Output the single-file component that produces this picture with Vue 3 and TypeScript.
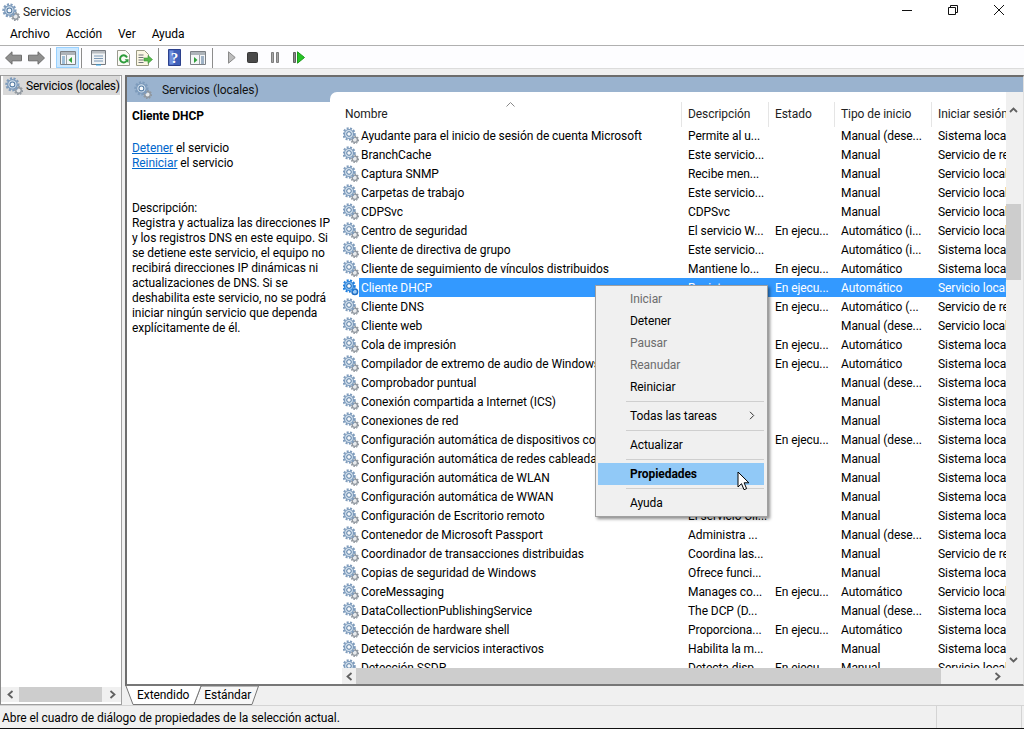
<script setup lang="ts">
// columns: nombre, descripcion, estado, tipo de inicio, inicio de sesion
type Row = [string, string, string, string, string]

const M = 'Manual'
const MD = 'Manual (dese...'
const A = 'Automático'
const AI = 'Automático (i...'
const SIS = 'Sistema local'
const LOC = 'Servicio local'
const RED = 'Servicio de red'
const RUN = 'En ejecu...'

const rows: Row[] = [
  ['Ayudante para el inicio de sesión de cuenta Microsoft', 'Permite al u...', '', MD, SIS],
  ['BranchCache', 'Este servicio...', '', M, RED],
  ['Captura SNMP', 'Recibe men...', '', M, LOC],
  ['Carpetas de trabajo', 'Este servicio...', '', M, LOC],
  ['CDPSvc', 'CDPSvc', '', M, LOC],
  ['Centro de seguridad', 'El servicio W...', RUN, AI, LOC],
  ['Cliente de directiva de grupo', 'Este servicio...', '', AI, SIS],
  ['Cliente de seguimiento de vínculos distribuidos', 'Mantiene lo...', RUN, A, SIS],
  ['Cliente DHCP', 'Registra y ac...', RUN, A, LOC],
  ['Cliente DNS', 'El servicio...', RUN, 'Automático (...', RED],
  ['Cliente web', 'Habilita los...', '', MD, LOC],
  ['Cola de impresión', 'Este servicio...', RUN, A, SIS],
  ['Compilador de extremo de audio de Windows', 'Administra...', RUN, A, SIS],
  ['Comprobador puntual', 'Comprueba...', '', MD, SIS],
  ['Conexión compartida a Internet (ICS)', 'Proporciona...', '', M, SIS],
  ['Conexiones de red', 'Administra...', '', M, SIS],
  ['Configuración automática de dispositivos conectados', 'Supervisa...', RUN, MD, SIS],
  ['Configuración automática de redes cableadas', 'El servicio...', '', M, SIS],
  ['Configuración automática de WLAN', 'El servicio...', '', M, SIS],
  ['Configuración automática de WWAN', 'Este servicio...', '', M, SIS],
  ['Configuración de Escritorio remoto', 'El servicio Cli...', '', M, SIS],
  ['Contenedor de Microsoft Passport', 'Administra ...', '', MD, SIS],
  ['Coordinador de transacciones distribuidas', 'Coordina las...', '', M, RED],
  ['Copias de seguridad de Windows', 'Ofrece funci...', '', M, SIS],
  ['CoreMessaging', 'Manages co...', RUN, A, LOC],
  ['DataCollectionPublishingService', 'The DCP (D...', '', MD, SIS],
  ['Detección de hardware shell', 'Proporciona...', RUN, A, SIS],
  ['Detección de servicios interactivos', 'Habilita la m...', '', M, SIS],
  ['Detección SSDP', 'Detecta disp...', RUN, M, LOC],
]

const selectedRow = 8

const description = [
  'Registra y actualiza las direcciones IP',
  'y los registros DNS en este equipo. Si',
  'se detiene este servicio, el equipo no',
  'recibirá direcciones IP dinámicas ni',
  'actualizaciones de DNS. Si se',
  'deshabilita este servicio, no se podrá',
  'iniciar ningún servicio que dependa',
  'explícitamente de él.',
]

const menuItems = [
  { label: 'Iniciar', disabled: true },
  { label: 'Detener' },
  { label: 'Pausar', disabled: true },
  { label: 'Reanudar', disabled: true },
  { label: 'Reiniciar', sep: true },
  { label: 'Todas las tareas', sub: true, sep: true },
  { label: 'Actualizar', sep: true },
  { label: 'Propiedades', active: true, sep: true },
  { label: 'Ayuda' },
]
</script>

<template>
  <div class="window">
    <svg class="defs" width="0" height="0">
      <defs>
        <symbol id="gear" viewBox="0 0 17 17">
          <circle cx="12.800" cy="12.800" r="2.600" fill="#e8eaec" stroke="#8f969e" stroke-width="1.300" />
          <circle cx="12.800" cy="12.800" r="3.700" fill="none" stroke="#8f969e" stroke-width="1.200" stroke-dasharray="1.500 1.300" />
          <circle cx="7" cy="7" r="5.700" fill="none" stroke="#7f9cbc" stroke-width="2" stroke-dasharray="2 1.400" />
          <circle cx="7" cy="7" r="4.500" fill="#d3e0ec" stroke="#7b9abc" stroke-width="1.200" />
          <circle cx="7" cy="7" r="2.300" fill="#f7f9fb" stroke="#557ba3" stroke-width="1" />
        </symbol>
        <symbol id="gear-sel" viewBox="0 0 17 17">
          <circle cx="12.800" cy="12.800" r="2.800" fill="#9ccbf7" stroke="#1f6fc4" stroke-width="1.500" />
          <circle cx="7" cy="7" r="5.700" fill="none" stroke="#1c7fe0" stroke-width="2" stroke-dasharray="2 1.400" />
          <circle cx="7" cy="7" r="4.500" fill="#7cbcf5" stroke="#2a7fd6" stroke-width="1.200" />
          <circle cx="7" cy="7" r="2.300" fill="#fff" stroke="#145fb0" stroke-width="1" />
        </symbol>
      </defs>
    </svg>

    <header class="titlebar">
      <svg class="title-icon" width="18" height="18"><use href="#gear" /></svg>
      <span class="title-text">Servicios</span>
      <div class="caption">
        <svg width="12" height="12" viewBox="0 0 12 12"><path d="M1 6.500h10" stroke="#111" fill="none" /></svg>
        <svg width="12" height="12" viewBox="0 0 12 12"><path d="M1.500 3.500h7v7h-7zM3.500 3.500v-2h7v7h-2" stroke="#111" fill="none" /></svg>
        <svg width="12" height="12" viewBox="0 0 12 12"><path d="M1 1l10 10M11 1L1 11" stroke="#111" fill="none" /></svg>
      </div>
    </header>

    <nav class="menubar">
      <span>Archivo</span><span>Acción</span><span>Ver</span><span>Ayuda</span>
    </nav>

    <div class="toolbar">
      <svg class="tb first" width="17" height="14" viewBox="0 0 17 14"><path d="M.5 7L7 .8v3.400h9.500v5.600H7v3.400z" fill="#8f8f8f" stroke="#6d6d6d" /></svg>
      <svg class="tb" width="17" height="14" viewBox="0 0 17 14"><path d="M16.500 7L10 .8v3.400H.5v5.600H10v3.400z" fill="#8f8f8f" stroke="#6d6d6d" /></svg>
      <i class="tb-sep"></i>
      <button class="tb-toggle">
        <svg width="16" height="14" viewBox="0 0 16 14"><path d="M.5.500h15v13H.5z" fill="#f4f6f8" stroke="#7d8186" /><path d="M1 1h14v3H1z" fill="#aeb4ba" /><path d="M2 6h3M2 8h3M2 10h3M2 12h3" stroke="#4a86b8" /><path d="M6.500 4v9" stroke="#9aa0a6" /><path d="M12 6v6L8.500 9z" fill="#2fa03a" /></svg>
      </button>
      <i class="tb-sep"></i>
      <svg class="tb gap-l" width="15" height="16" viewBox="0 0 15 16"><path d="M.5.500h14v14H.5z" fill="#f1f3f5" stroke="#767a80" /><path d="M1 1h13v2.500H1z" fill="#b8bcc1" /><path d="M3 6h9M3 8.500h9M3 11h9" stroke="#7b98b6" /><path d="M5 14.500h5v1H5z" fill="#2ba3e8" /></svg>
      <svg class="tb gap-m" width="15" height="16" viewBox="0 0 15 16"><path d="M1.500.500h8l4 4v11h-12z" fill="#fbfbf6" stroke="#9a9a90" /><path d="M11 7.500A3.600 3.600 0 1 0 10.600 11" fill="none" stroke="#2e9c3c" stroke-width="2" /><path d="M8.600 9.200l4 .1-.2 3.700z" fill="#2e9c3c" /></svg>
      <svg class="tb gap-s" width="17" height="16" viewBox="0 0 17 16"><path d="M.5.500h8l4 4v11H.5z" fill="#fbf7e4" stroke="#9a9a84" /><path d="M2.500 5h5M2.500 7.500h5M2.500 10h5M2.500 12.500h5" stroke="#6f7378" /><path d="M8 8h4V5.500l4.500 4-4.500 4V11H8z" fill="#56b84a" stroke="#3a9437" stroke-width=".6" /></svg>
      <i class="tb-sep"></i>
      <svg class="tb gap-help" width="13" height="17" viewBox="0 0 13 17"><path d="M.5.500h12v16H.5z" fill="#3f5fb8" stroke="#2a3f8c" /><path d="M1.500 1.500h4v14h-4z" fill="#6f8fdc" /><text x="6.500" y="13.500" text-anchor="middle" class="help-q">?</text></svg>
      <svg class="tb gap-n" width="16" height="14" viewBox="0 0 16 14"><path d="M.5.500h15v13H.5z" fill="#f4f6f8" stroke="#7d8186" /><path d="M1 1h14v3H1z" fill="#aeb4ba" /><path d="M9.500 4v9" stroke="#9aa0a6" /><path d="M11 6h3M11 8h3M11 10h3M11 12h3" stroke="#4a6f94" /><path d="M4 6v6l3.500-3z" fill="#2fa03a" /></svg>
      <i class="tb-sep sep-wide"></i>
      <svg class="tb gap-play" width="8" height="13" viewBox="0 0 8 13"><path d="M.5.800L7.200 6.500.5 12.200z" fill="#bdbdbd" stroke="#8a8a8a" /></svg>
      <svg class="tb gap-stop" width="11" height="11" viewBox="0 0 11 11"><rect x=".5" y=".5" width="10" height="10" rx="1" fill="#4a4a4a" stroke="#383838" /></svg>
      <svg class="tb gap-pause" width="8" height="11" viewBox="0 0 8 11"><path d="M.5.500h2v10h-2zM5.500.500h2v10h-2z" fill="#a6a6a6" stroke="#7d7d7d" /></svg>
      <svg class="tb gap-resume" width="12" height="13" viewBox="0 0 12 13"><path d="M.5 1.500h2v10h-2z" fill="#8a8a8a" stroke="#5f5f5f" /><path d="M4.500.800l7 5.700-7 5.700z" fill="#27c427" stroke="#1b9a1b" /></svg>
    </div>

    <main class="panes">
      <aside class="tree">
        <div class="tree-list">
          <div class="tree-item">
            <svg width="18" height="18"><use href="#gear" /></svg>
            <span>Servicios (locales)</span>
          </div>
        </div>
        <div class="hscroll tree-scroll">
          <span class="arr">
            <svg width="9" height="9" viewBox="0 0 9 9"><path d="M6.500 1L2.500 4.500l4 3.500" class="chev" /></svg>
          </span>
          <div class="h-track"><div class="h-thumb"></div></div>
          <span class="arr">
            <svg width="9" height="9" viewBox="0 0 9 9"><path d="M2.500 1l4 3.500-4 3.500" class="chev" /></svg>
          </span>
        </div>
      </aside>

      <section class="content">
        <div class="view">
          <div class="view-head">
            <svg width="18" height="18"><use href="#gear" /></svg>
            <span>Servicios (locales)</span>
          </div>
          <div class="view-body">
            <div class="task">
              <h1>Cliente DHCP</h1>
              <p class="links">
                <span><a>Detener</a> el servicio</span>
                <span><a>Reiniciar</a> el servicio</span>
              </p>
              <p class="desc">
                <span>Descripción:</span>
                <span v-for="line in description" :key="line">{{ line }}</span>
              </p>
            </div>

            <div class="listwrap">
              <div class="list-main">
                <div class="vis">
                  <div class="list-head">
                    <div class="hcell c0">Nombre<svg class="sort" width="9" height="5" viewBox="0 0 9 5"><path d="M.5 4.500l4-4 4 4" fill="none" stroke="#888" /></svg></div>
                    <div class="hcell c1">Descripción</div>
                    <div class="hcell c2">Estado</div>
                    <div class="hcell c3">Tipo de inicio</div>
                    <div class="hcell c4">Iniciar sesión</div>
                  </div>
                  <div class="rows">
                    <div v-for="(r, i) in rows" :key="r[0]" class="row" :class="{ sel: i === selectedRow }">
                      <div class="cell c0">
                        <svg width="17" height="17"><use :href="i === selectedRow ? '#gear-sel' : '#gear'" /></svg>
                        <span class="name">{{ r[0] }}</span>
                      </div>
                      <div class="cell c1">{{ r[1] }}</div>
                      <div class="cell c2">{{ r[2] }}</div>
                      <div class="cell c3">{{ r[3] }}</div>
                      <div class="cell c4">{{ r[4] }}</div>
                    </div>
                  </div>
                </div>
                <div class="vscroll">
                  <span class="varr">
                    <svg width="9" height="9" viewBox="0 0 9 9"><path d="M1 6l3.500-3.500L8 6" class="chev" /></svg>
                  </span>
                  <div class="v-track"><div class="v-thumb"></div></div>
                  <span class="varr">
                    <svg width="9" height="9" viewBox="0 0 9 9"><path d="M1 3l3.500 3.500L8 3" class="chev" /></svg>
                  </span>
                </div>
              </div>
              <div class="hscroll list-scroll">
                <span class="arr">
                  <svg width="9" height="9" viewBox="0 0 9 9"><path d="M6.500 1L2.500 4.500l4 3.500" class="chev" /></svg>
                </span>
                <div class="h-track"><div class="h-thumb"></div></div>
                <span class="arr">
                  <svg width="9" height="9" viewBox="0 0 9 9"><path d="M2.500 1l4 3.500-4 3.500" class="chev" /></svg>
                </span>
                <span class="corner"></span>
              </div>
            </div>
          </div>
        </div>
        <div class="tabs">
          <svg class="tab-lines" width="140" height="19" viewBox="0 0 140 19">
            <path d="M76 0H133.500L127 18.500H69z" fill="#f7f7f7" stroke="#777" />
            <path d="M1 0L8 18.500H69L76 0z" fill="#fff" stroke="none" />
            <path d="M1 0L8 18.500H69L76 0" fill="none" stroke="#777" />
          </svg>
          <span class="tab tab-a">Extendido</span>
          <span class="tab tab-b">Estándar</span>
        </div>
      </section>
    </main>

    <footer class="status">
      <span class="status-main">Abre el cuadro de diálogo de propiedades de la selección actual.</span>
      <span class="status-a"></span>
      <span class="status-b"></span>
    </footer>

    <div class="ctx">
      <template v-for="m in menuItems" :key="m.label">
        <div class="ctx-item" :class="{ off: m.disabled, on: m.active }">
          <span>{{ m.label }}</span>
          <svg v-if="m.sub" class="ctx-sub" width="6" height="9" viewBox="0 0 6 9"><path d="M1 .8l3.700 3.700L1 8.200" fill="none" stroke="#333" /></svg>
        </div>
        <div v-if="m.sep" class="ctx-sep"></div>
      </template>
    </div>

    <svg class="cursor" width="14" height="21" viewBox="0 0 14 21">
      <path d="M1 1v15l3.500-3.300 2.500 6 2.600-1.100-2.500-5.800h4.800z" fill="#fff" stroke="#000" stroke-width="1" />
    </svg>
  </div>
</template>

<style>
html, body {
  margin: 0;
  background: #fff;
}
</style>

<style scoped>
.window {
  position: relative;
  width: 1024px;
  height: 729px;
  overflow: hidden;
  display: flex;
  flex-direction: column;
  background: #f0f0f0;
  color: #000;
  font-family: Roboto, "Noto Sans", sans-serif;
  font-size: 12px;
  letter-spacing: -0.07px;
  border-bottom: 1px solid #111;
  box-sizing: border-box;
}
.defs { position: absolute; }

.titlebar {
  height: 24px;
  flex: none;
  display: flex;
  align-items: center;
  background: #fff;
  padding-left: 2px;
}
.title-text { margin-left: 3px; margin-bottom: 1px; color: #222; }
.caption {
  margin-left: auto;
  margin-bottom: 4px;
  padding-right: 19px;
  display: flex;
  gap: 34px;
}

.menubar {
  height: 21px;
  flex: none;
  display: flex;
  align-items: center;
  gap: 16px;
  padding-left: 10px;
  background: #fff;
  border-bottom: 1px solid #b0b0b0;
}
.menubar span { margin-bottom: 2px; }

.toolbar {
  height: 21px;
  padding-top: 1px;
  flex: none;
  display: flex;
  align-items: center;
  background: #fdfdff;
  border-bottom: 1px solid #dcdcdc;
}
.tb { flex: none; }
.first { margin-left: 5px; margin-right: 6px; }
.tb-sep { flex: none; width: 1px; height: 20px; background: #8c8c8c; margin: 0 5px 0 5px; }
.tb-toggle {
  width: 23px;
  height: 21px;
  padding: 0;
  flex: none;
  display: flex;
  align-items: center;
  justify-content: center;
  background: #cce8ff;
  border: 1px solid #99d1ff;
  box-sizing: border-box;
  margin-right: -3px;
}
.gap-l { margin-left: 4px; }
.gap-m { margin-left: 10px; }
.gap-s { margin-left: 5px; }
.gap-n { margin-left: 9px; }
.sep-wide { margin-left: 6px; }
.gap-help { margin-left: 4px; }
.gap-play { margin-left: 10px; }
.gap-stop { margin-left: 11px; }
.gap-pause { margin-left: 13px; }
.gap-resume { margin-left: 14px; }
.help-q { font: bold 15px "Liberation Serif", serif; fill: #fff; }

.panes {
  flex: 1;
  min-height: 0;
  display: flex;
  margin-top: 6px;
  gap: 3px;
}

.tree {
  width: 122px;
  flex: none;
  display: flex;
  flex-direction: column;
  background: #fff;
  border: 1px solid #a0a0a0;
  border-left-color: #8a8a8a;
  box-sizing: border-box;
}
.tree-list { flex: 1; padding: 0 1px 0 2px; }
.tree-item {
  height: 19px;
  display: flex;
  align-items: center;
  gap: 3px;
  background: #d9d9d9;
  padding-left: 2px;
  white-space: nowrap;
  letter-spacing: -0.22px;
  overflow: hidden;
}
.tree-item svg { flex: none; }

.hscroll {
  flex: none;
  height: 16px;
  display: flex;
  background: #f0f0f0;
}
.tree-scroll { height: 15px; margin-bottom: 2px; }
.arr {
  width: 18px;
  flex: none;
  display: flex;
  align-items: center;
  justify-content: center;
}
.h-track { flex: 1; min-width: 0; }
.h-thumb { height: 100%; background: #cdcdcd; }
.chev { fill: none; stroke: #606060; stroke-width: 1.8; }
.corner { width: 17px; flex: none; }

.content {
  flex: 1;
  min-width: 0;
  display: flex;
  flex-direction: column;
}
.view {
  flex: 1;
  min-height: 0;
  display: flex;
  flex-direction: column;
  border-top: 2px solid #6d6d6d;
  border-left: 2px solid #6d6d6d;
  border-bottom: 2px solid #777;
  border-right: 1px solid #e0e0e0;
  background: #fff;
  position: relative;
}
.view-head {
  flex: none;
  height: 25px;
  display: flex;
  align-items: center;
  gap: 10px;
  padding-left: 7px;
  background: #9ab3cf;
  color: #111;
}
.view-body {
  flex: 1;
  min-height: 0;
  display: flex;
}
.task {
  width: 203px;
  flex: none;
  box-sizing: border-box;
  padding: 6px 0 0 5px;
  line-height: 15px;
  background: #fff;
  white-space: nowrap;
}
.task h1 { margin: 0; font-size: 12px; line-height: 16px; font-weight: 700; }
.task p { margin: 0; }
.task span { display: block; }
.links { margin-top: 17px !important; }
.links a { color: #0066cc; text-decoration: underline; }
.desc { margin-top: 30px !important; }

.listwrap {
  flex: 1;
  min-width: 0;
  display: flex;
  flex-direction: column;
  margin-top: -10px;
  background: #fff;
  border-top-left-radius: 7px;
  position: relative;
}
.list-main { flex: 1; min-height: 0; display: flex; }
.vis { flex: 1; min-width: 0; overflow: hidden; padding-left: 13px; }
.list-head {
  display: flex;
  height: 35px;
  box-sizing: border-box;
  padding-top: 10px;
}
.hcell {
  height: 25px;
  line-height: 24px;
  flex: none;
  box-sizing: border-box;
  padding-left: 2px;
  color: #222;
  position: relative;
  white-space: nowrap;
  overflow: hidden;
}
.hcell + .hcell { border-left: 1px solid #e5e5e5; padding-left: 6px; }
.sort { position: absolute; left: 163px; top: 0; }
.c0 { width: 338px; }
.c1 { width: 87px; }
.c2 { width: 66px; }
.c3 { width: 97px; }
.c4 { width: 75px; }
.rows { margin-top: -1px; }
.row {
  display: flex;
  height: 19px;
  line-height: 18px;
  white-space: nowrap;
}
.cell { flex: none; overflow: hidden; box-sizing: border-box; padding: 1px 0 0 7px; }
.cell.c0 { display: flex; align-items: center; padding: 0; }
.cell.c0 svg { flex: none; margin-left: -1px; }
.name { align-self: stretch; padding: 1px 2px 0; overflow: hidden; }
.row.sel .cell { background: #3399ff; color: #fff; }
.row.sel .cell.c0 { background: none; }
.row.sel .name { flex: 1; background: #3399ff; color: #fff; }

.vscroll {
  width: 17px;
  flex: none;
  display: flex;
  flex-direction: column;
  box-sizing: border-box;
  background: #f0f0f0;
  padding: 10px 2px 0 0;
}
.varr { height: 17px; flex: none; display: flex; align-items: center; justify-content: center; }
.v-track { flex: 1; padding-top: 85px; }
.v-thumb { height: 76px; background: #cdcdcd; }

.list-scroll { padding-left: 12px; background: linear-gradient(90deg, #fff 12px, #f0f0f0 12px); }
.list-scroll .arr:first-child { width: 14px; }
.list-scroll .h-thumb { width: 585px; }
.tree-scroll .h-thumb { width: 83px; }

.tabs {
  flex: none;
  height: 19px;
  position: relative;
  display: flex;
}
.tab-lines { position: absolute; left: 0; top: 0; }
.tab { position: relative; line-height: 19px; }
.tab-a { margin-left: 12px; }
.tab-b { margin-left: 15px; }

.status {
  flex: none;
  height: 23px;
  display: flex;
  align-items: center;
  border-top: 1px solid #d4d4d4;
  box-sizing: border-box;
}
.status-main { width: 936px; flex: none; margin-top: 2px; padding-left: 2px; box-sizing: border-box; white-space: nowrap; }
.status-a { width: 85px; flex: none; height: 100%; border-left: 1px solid #d4d4d4; box-sizing: border-box; }
.status-b { flex: 1; height: 100%; border-left: 1px solid #d4d4d4; }

.ctx {
  position: absolute;
  left: 595px;
  top: 285px;
  width: 173px;
  height: 232px;
  box-sizing: border-box;
  padding: 2px 3px 0 2px;
  background: #f0f0f0;
  border: 1px solid #a0a0a0;
  box-shadow: 2px 2px 3px rgba(0, 0, 0, 0.45);
}
.ctx-item {
  position: relative;
  height: 22px;
  line-height: 22px;
  padding-left: 32px;
}
.ctx-item.off { color: #6d6d6d; }
.ctx-item.on { background: #91c9f7; font-weight: 700; }
.ctx-sub { position: absolute; right: 9px; top: 6px; }
.ctx-sep {
  height: 1px;
  background: #cfcfcf;
  margin: 3px 0 3px 28px;
}

.cursor { position: absolute; left: 737px; top: 471px; }
</style>
